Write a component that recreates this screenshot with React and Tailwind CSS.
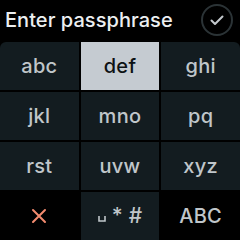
import React from 'react';

const keys = ['abc', 'def', 'ghi', 'jkl', 'mno', 'pq', 'rst', 'uvw', 'xyz'];

const App = () => {
  return (
    <div className="w-[240px] h-[240px] bg-black flex flex-col overflow-hidden" style={{ fontFamily: 'Inter, "Noto Sans", sans-serif' }}>
      <div className="h-[42px] flex items-center justify-between pl-[5px] pr-[7px]">
        <h1 className="text-[20px] font-medium text-[#eceff1] tracking-[0.05px] mt-[-2px]">Enter passphrase</h1>
        <svg width="32" height="32" viewBox="0 0 32 32" className="mt-[-2px]">
          <circle cx="16" cy="16" r="15" fill="none" stroke="#2b3336" strokeWidth="2" />
          <path d="M10.5 16.5 L14 20 L21.5 12.5" fill="none" stroke="#c4c9cd" strokeWidth="2" strokeLinecap="round" strokeLinejoin="round" />
        </svg>
      </div>
      <div className="flex-1 grid grid-cols-3 grid-rows-4 gap-[2px] rounded-t-[6px] overflow-hidden">
        {keys.map((k) => (
          <div
            key={k}
            className={`flex items-center justify-center text-[20px] font-medium tracking-[0.3px] ${k === 'def' ? 'bg-[#c5cbd1] text-[#0d1214]' : 'bg-[#131c20] text-[#c0c6ca]'}`}
          >
            {k}
          </div>
        ))}
        <div className="flex items-center justify-center">
          <svg width="16" height="16" viewBox="0 0 16 16">
            <path d="M2 2 L14 14 M14 2 L2 14" stroke="#f28b6f" strokeWidth="2" strokeLinecap="round" />
          </svg>
        </div>
        <div className="flex items-center justify-center gap-[6px] bg-[#131c20] text-[#c0c6ca] text-[21px] font-medium">
          <svg width="8" height="6" viewBox="0 0 8 6" className="mt-[6px]">
            <path d="M1 0 V5 H7 V0" fill="none" stroke="#c0c6ca" strokeWidth="1.6" />
          </svg>
          <span>*</span>
          <span>#</span>
        </div>
        <div className="flex items-center justify-center text-[20px] font-medium tracking-[0.3px] text-[#c0c6ca]">ABC</div>
      </div>
    </div>
  );
};

export default App;
